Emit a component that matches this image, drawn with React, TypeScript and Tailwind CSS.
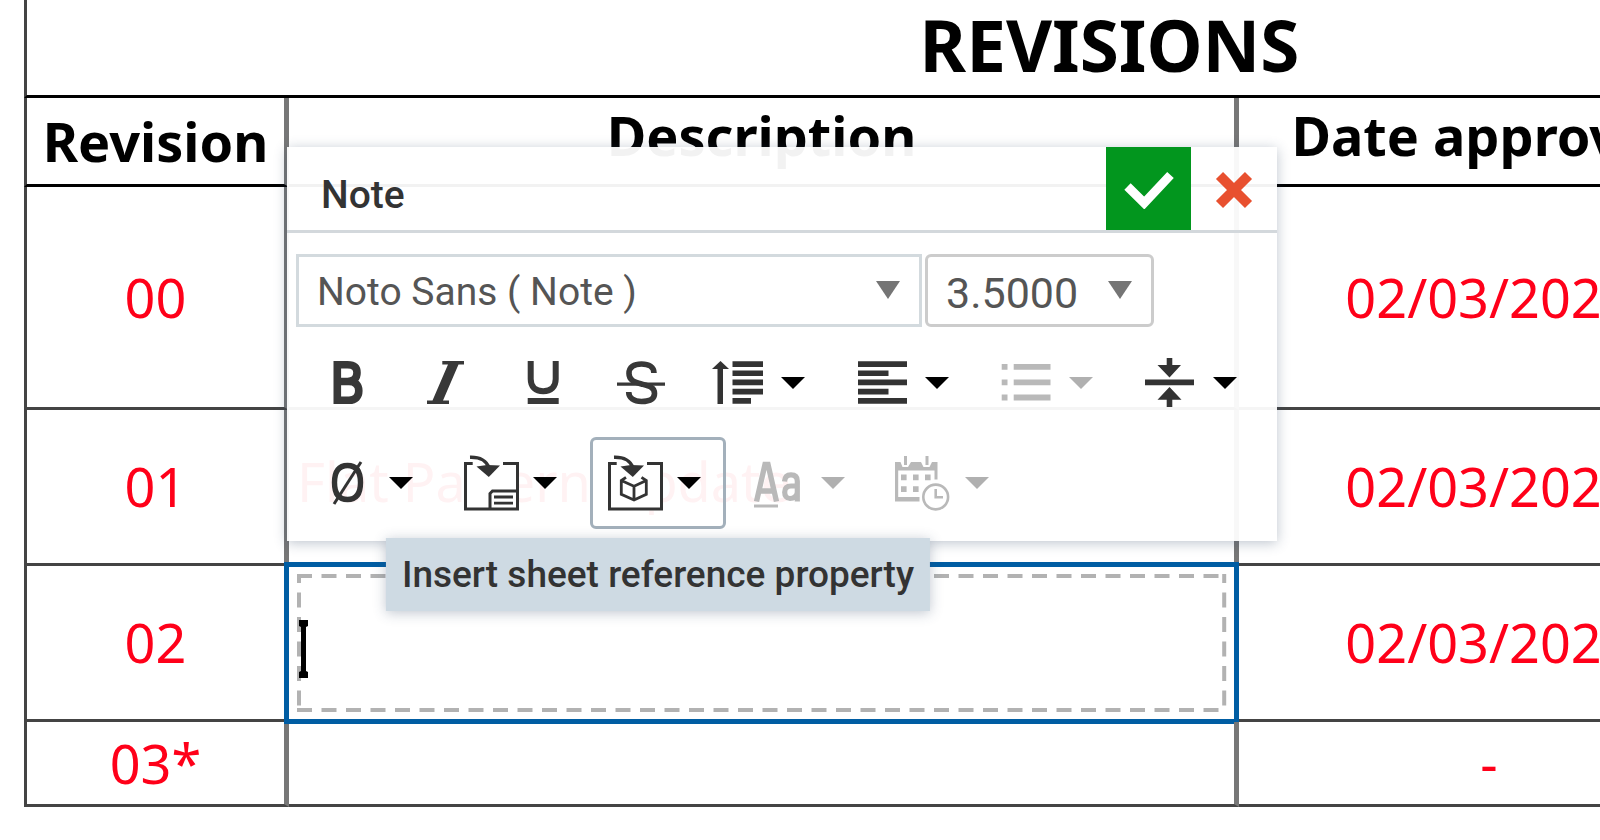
import type { ReactNode } from "react";

const NOTO = "font-['Noto_Sans',sans-serif]";
const UI = "font-[Roboto,sans-serif]";

type Row = {
  revision: string;
  description: string;
  date: string;
  height: string;
  editing?: boolean;
};

const rows: Row[] = [
  { revision: "00", description: "", date: "02/03/2022", height: "h-[223px]" },
  { revision: "01", description: "Flat Pattern Update", date: "02/03/2022", height: "h-[156px]" },
  { revision: "02", description: "", date: "02/03/2022", height: "h-[156px]", editing: true },
  { revision: "03*", description: "", date: "-", height: "h-[85px]" },
];

function Icon({ children }: { children: ReactNode }) {
  return (
    <svg viewBox="0 0 56 56" className="h-14 w-14 shrink-0" fill="none" aria-hidden="true">
      {children}
    </svg>
  );
}

const BoldIcon = () => (
  <Icon>
    <path
      d="M18.5 9.8H28.5C35 9.8 38 12.5 38 17.8S35 26.5 28.5 26.5H18.5M28.5 26.5H30C36.5 26.5 39.8 30 39.8 35.8S36.5 45.3 30 45.3H18.3V9.8"
      stroke="currentColor"
      strokeWidth="7.6"
      strokeLinejoin="miter"
      strokeLinecap="square"
    />
  </Icon>
);

const ItalicIcon = () => (
  <Icon>
    <path d="M25.3 6H47V9.4H41.5L26 45.6H32V49H10V45.6H15.5L31 9.4H25.3Z" fill="currentColor" />
  </Icon>
);

const UnderlineIcon = () => (
  <Icon>
    <path d="M15.7 6V24C15.7 32 20.5 36.2 28.2 36.2S40.7 32 40.7 24V6" stroke="currentColor" strokeWidth="6" />
    <path d="M12.7 43H43.7V49H12.7Z" fill="currentColor" />
  </Icon>
);

const StrikeIcon = () => (
  <Icon>
    <path
      d="M41 18C41 12 36 9 28.5 9S16 12 16 18.5S21 27 28.5 29S41.5 32 41.5 38.5S36 46.5 28.5 46.5S15.7 43 15.7 37"
      stroke="currentColor"
      strokeWidth="5.6"
    />
    <path d="M4 27.5H52V30.7H4Z" fill="currentColor" />
  </Icon>
);

const SpacingIcon = () => (
  <Icon>
    <path
      d="M1 14L9.5 6L18 14H12V49H6.5V14ZM21.5 6.3H52V12H21.5ZM21.5 15.4H52V21H21.5ZM21.5 24.6H52V30.2H21.5ZM21.5 33.8H52V39.4H21.5ZM21.5 43H40V48.8H21.5Z"
      fill="currentColor"
    />
  </Icon>
);

const AlignIcon = () => (
  <Icon>
    <path
      d="M3 6.3H52V12H3ZM3 15.4H33.5V21H3ZM3 24.6H52V30.2H3ZM3 33.8H33.5V39.4H3ZM3 43H52V48.8H3Z"
      fill="currentColor"
    />
  </Icon>
);

const ListIcon = () => (
  <Icon>
    <path
      d="M2.7 9H8.5V14.8H2.7ZM14.7 9H51.5V14.8H14.7ZM2.7 24.4H8.5V30.2H2.7ZM14.7 24.4H51.5V30.2H14.7ZM2.7 39.6H8.5V45.4H2.7ZM14.7 39.6H51.5V45.4H14.7Z"
      fill="currentColor"
    />
  </Icon>
);

const MiddleIcon = () => (
  <Icon>
    <path
      d="M2 24.6H51V30.2H2ZM23.7 3H29.3V10H38L26.5 22.5L14.5 10H23.7ZM26.5 32L38.5 44.7H29.3V52H23.7V44.7H14.5Z"
      fill="currentColor"
    />
  </Icon>
);

const DiameterIcon = () => (
  <Icon>
    <path
      d="M28.5 10.5C37 10.5 41.5 16 41.5 27.5S37 44.5 28.5 44.5S15.5 39 15.5 27.5S20 10.5 28.5 10.5Z"
      stroke="currentColor"
      strokeWidth="5.4"
    />
    <path d="M15 49L42 7" stroke="currentColor" strokeWidth="3" />
  </Icon>
);

const Frame = () => (
  <>
    <path d="M1 7H56V55.5H1Z" fill="#fff" />
    <path d="M9.7 8.6H2.5V54H54.5V8.6H40" stroke="currentColor" strokeWidth="3" />
    <path d="M7 2.3C17 2 24 6 26 13" stroke="currentColor" strokeWidth="3.4" />
    <path d="M13.5 11.5L24 10L37 10.5L25.8 22Z" fill="currentColor" />
  </>
);

const InsertNoteIcon = () => (
  <Icon>
    <Frame />
    <path d="M27 54V38.5L29.5 36H54.5" stroke="currentColor" strokeWidth="3" />
    <path d="M31 42H50M31 48.2H50" stroke="currentColor" strokeWidth="2.8" />
  </Icon>
);

const InsertReferenceIcon = () => (
  <Icon>
    <Frame />
    <path
      d="M19 22.3L14.3 25.5V39.3L27 45L39.3 39.3V25.5L34.5 22.3M14.3 25.5L27 31.3L39.3 25.5M27 31.3V45"
      stroke="currentColor"
      strokeWidth="2.8"
    />
  </Icon>
);

const CaseIcon = () => (
  <Icon>
    <path d="M5.5 46.5L14 9.5H17L25.5 46.5M9 36H22" stroke="currentColor" strokeWidth="5.4" />
    <path
      d="M33.5 26.5C33.8 21.5 36.5 19.8 40 19.8C44.5 19.8 46.3 22 46.3 26V46.5M46.3 31H40C35.5 31 33.7 33.5 33.7 37.2S35.5 43.5 39 43.5S46.3 41 46.3 37"
      stroke="currentColor"
      strokeWidth="5.2"
    />
    <path d="M3 51H27" stroke="currentColor" strokeWidth="3" />
  </Icon>
);

const CalendarIcon = () => (
  <Icon>
    <path
      d="M0 7H5.5L7.5 12H13L16 7H26L28.5 12H34.5L37 7H42.5V24.5H39.5V15.5H3.2V42H24.5V46.5H0ZM9 1H12V10H9ZM30.5 1H33.5V10H30.5ZM6 19.5H11.6V25.3H6ZM18 19.5H23.6V25.3H18ZM30 19.5H35.6V25.3H30ZM6 31.3H11.6V37.1H6ZM18 31.3H23.6V37.1H18Z"
      fill="currentColor"
    />
    <circle cx="40.7" cy="42" r="12.4" stroke="currentColor" strokeWidth="2.6" />
    <path d="M40.7 34V42.3H48" stroke="currentColor" strokeWidth="2.6" />
  </Icon>
);

function Caret() {
  return (
    <svg viewBox="0 0 24 12" className="h-3 w-6 shrink-0" aria-hidden="true">
      <path d="M0 0H24L12 12Z" fill="currentColor" />
    </svg>
  );
}

function ToggleButton({ label, children }: { label: string; children: ReactNode }) {
  return (
    <button type="button" aria-label={label} className="flex h-[92px] w-[90px] items-center justify-center text-[#383838]">
      {children}
    </button>
  );
}

function MenuButton({
  label,
  active,
  disabled,
  children,
}: {
  label: string;
  active?: boolean;
  disabled?: boolean;
  children: ReactNode;
}) {
  return (
    <div className="relative">
      <button
        type="button"
        aria-label={label}
        aria-haspopup="menu"
        disabled={disabled}
        className={`flex h-[92px] w-[136px] items-center gap-[14px] rounded-md border-[3px] pl-[14px] ${
          active ? "border-[#a3b0bb]" : "border-transparent"
        } ${disabled ? "text-[#b9b9b9]" : "text-[#333333]"}`}
      >
        {children}
        <span className={disabled ? "text-[#b0b0b0]" : "text-black"}>
          <Caret />
        </span>
      </button>
      {active && (
        <div
          role="tooltip"
          className="absolute top-full left-1/2 z-10 mt-[9px] flex h-[73px] -translate-x-1/2 items-center bg-[#cedae3] px-4 text-[37px] font-medium whitespace-nowrap text-[#333333] shadow-[0_2px_12px_rgba(50,70,100,0.3)]"
        >
          {label}
        </div>
      )}
    </div>
  );
}

function SelectArrow() {
  return (
    <svg viewBox="0 0 24 18" className="pointer-events-none absolute top-[27px] right-[22px] h-[18px] w-6" aria-hidden="true">
      <path d="M0 0H24L12 18Z" fill="#757575" />
    </svg>
  );
}

function NotePanel() {
  return (
    <section
      aria-label="Note"
      className={`absolute top-[147px] left-[287px] w-[990px] bg-white/95 pb-3 shadow-[0_2px_12px_rgba(50,70,100,0.32)] ${UI}`}
    >
      <header className="flex h-[86px] border-b-[3px] border-[#d3d8dc]">
        <h2 className="flex-1 pt-[26px] pl-[34px] text-[39px] leading-[44px] font-medium text-[#333333]">Note</h2>
        <button type="button" aria-label="Accept" className="flex w-[85px] items-center justify-center bg-[#02961e] pt-[3px]">
          <svg viewBox="0 0 50 38" className="h-[38px] w-[50px]" fill="none" aria-hidden="true">
            <path d="M3.5 15.5L20.2 32L46.5 4" stroke="#fff" strokeWidth="9" />
          </svg>
        </button>
        <button type="button" aria-label="Cancel" className="flex w-[86px] items-center justify-center pt-[3px]">
          <svg viewBox="0 0 38 38" className="h-[38px] w-[38px]" fill="none" aria-hidden="true">
            <path d="M4.5 4.5L33.5 33.5M33.5 4.5L4.5 33.5" stroke="#e8502f" strokeWidth="10" />
          </svg>
        </button>
      </header>

      <div className="flex gap-[3px] pt-[21px] pl-[9px] text-[#555555]">
        <div className="relative w-[626px]">
          <select
            aria-label="Font"
            className="h-[73px] w-full appearance-none border-[3px] border-[#d3dade] bg-transparent pt-1 pl-[18px] text-[39px]"
          >
            <option>Noto Sans ( Note )</option>
          </select>
          <SelectArrow />
        </div>
        <div className="relative w-[229px]">
          <select
            aria-label="Text height"
            className="h-[73px] w-full appearance-none rounded-md border-[3px] border-[#cccccc] bg-transparent pt-1 pl-[18px] text-[43px]"
          >
            <option>3.5000</option>
          </select>
          <SelectArrow />
        </div>
      </div>

      <div className="mt-[10px] flex gap-2 pl-[15px]">
        <ToggleButton label="Bold">
          <BoldIcon />
        </ToggleButton>
        <ToggleButton label="Italic">
          <ItalicIcon />
        </ToggleButton>
        <ToggleButton label="Underline">
          <UnderlineIcon />
        </ToggleButton>
        <ToggleButton label="Strikethrough">
          <StrikeIcon />
        </ToggleButton>
        <MenuButton label="Line spacing">
          <SpacingIcon />
        </MenuButton>
        <MenuButton label="Align text">
          <AlignIcon />
        </MenuButton>
        <MenuButton label="List" disabled>
          <ListIcon />
        </MenuButton>
        <MenuButton label="Vertical align">
          <MiddleIcon />
        </MenuButton>
      </div>

      <div className="mt-2 flex gap-2 pl-[15px]">
        <MenuButton label="Insert symbol">
          <DiameterIcon />
        </MenuButton>
        <MenuButton label="Insert drawing property">
          <InsertNoteIcon />
        </MenuButton>
        <MenuButton label="Insert sheet reference property" active>
          <InsertReferenceIcon />
        </MenuButton>
        <MenuButton label="Text case" disabled>
          <CaseIcon />
        </MenuButton>
        <MenuButton label="Date format" disabled>
          <CalendarIcon />
        </MenuButton>
      </div>
    </section>
  );
}

function CellEditor() {
  return (
    <div className="absolute -inset-x-[5px] -top-1 -bottom-[5px] border-[5px] border-[#005da3] p-[7px]">
      <div className="relative h-full">
        <svg className="absolute inset-0 h-full w-full" fill="none" stroke="#b2b2b2" strokeWidth="4" strokeDasharray="15 9.5" aria-hidden="true">
          <line x1="1" y1="2" x2="100%" y2="2" />
          <line x1="1" y1="98.5%" x2="100%" y2="98.5%" />
          <line x1="3" y1="0" x2="3" y2="100%" strokeDashoffset="6" />
          <line x1="99.7%" y1="0" x2="99.7%" y2="100%" strokeDashoffset="6" />
        </svg>
        <textarea
          aria-label="Description for revision 02"
          className="absolute inset-0 h-full w-full resize-none bg-transparent outline-none"
        />
        <svg viewBox="0 0 9 58" className="absolute top-[46px] left-[3px] h-[58px] w-[9px]" aria-hidden="true">
          <path d="M0 0H9V6L7 7V51L9 52V58H0V52L2 51V7L0 6Z" fill="#000" />
        </svg>
      </div>
    </div>
  );
}

export default function App() {
  return (
    <main className={`relative min-h-screen overflow-hidden bg-white ${NOTO}`}>
      <table className="ml-6 w-[2171px] table-fixed border-separate border-spacing-0 text-center text-[54px] leading-[75px]">
        <colgroup>
          <col className="w-[265px]" />
          <col className="w-[950px]" />
          <col className="w-[505px]" />
          <col />
        </colgroup>
        <thead className="text-black">
          <tr className="h-[98px]">
            <th colSpan={4} className="border-x-[3px] border-b-[3px] border-black border-l-[#444444] p-0 pb-[5px] text-[71px] leading-[88px] font-bold">
              REVISIONS
            </th>
          </tr>
          <tr className="h-[89px]">
            <th className="border-r-[5px] border-b-[3px] border-l-[3px] border-r-[#777777] border-b-black border-l-[#444444] p-0 font-bold">
              Revision
            </th>
            <th className="border-r-[5px] border-b-[3px] border-r-[#777777] border-b-black p-0 pb-3 leading-[68px] font-bold">
              Description
            </th>
            <th className="border-r-[5px] border-b-[3px] border-r-[#777777] border-b-black p-0 pb-3 leading-[68px] font-bold">
              Date approved
            </th>
            <td className="border-r-[3px] border-b-[3px] border-black p-0" />
          </tr>
        </thead>
        <tbody className="text-[#ff0019]">
          {rows.map((row) => (
            <tr key={row.revision} className={row.height}>
              <td className="border-r-[5px] border-b-[3px] border-l-[3px] border-r-[#777777] border-b-[#444444] border-l-[#444444] p-0">
                {row.revision}
              </td>
              <td className="relative border-r-[5px] border-b-[3px] border-r-[#777777] border-b-[#444444] p-0 pb-3 pl-2 text-left leading-[68px]">
                {row.description}
                {row.editing && <CellEditor />}
              </td>
              <td className="border-r-[5px] border-b-[3px] border-r-[#777777] border-b-[#444444] p-0">{row.date}</td>
              <td className="border-r-[3px] border-b-[3px] border-[#444444] p-0" />
            </tr>
          ))}
        </tbody>
      </table>
      <NotePanel />
    </main>
  );
}
